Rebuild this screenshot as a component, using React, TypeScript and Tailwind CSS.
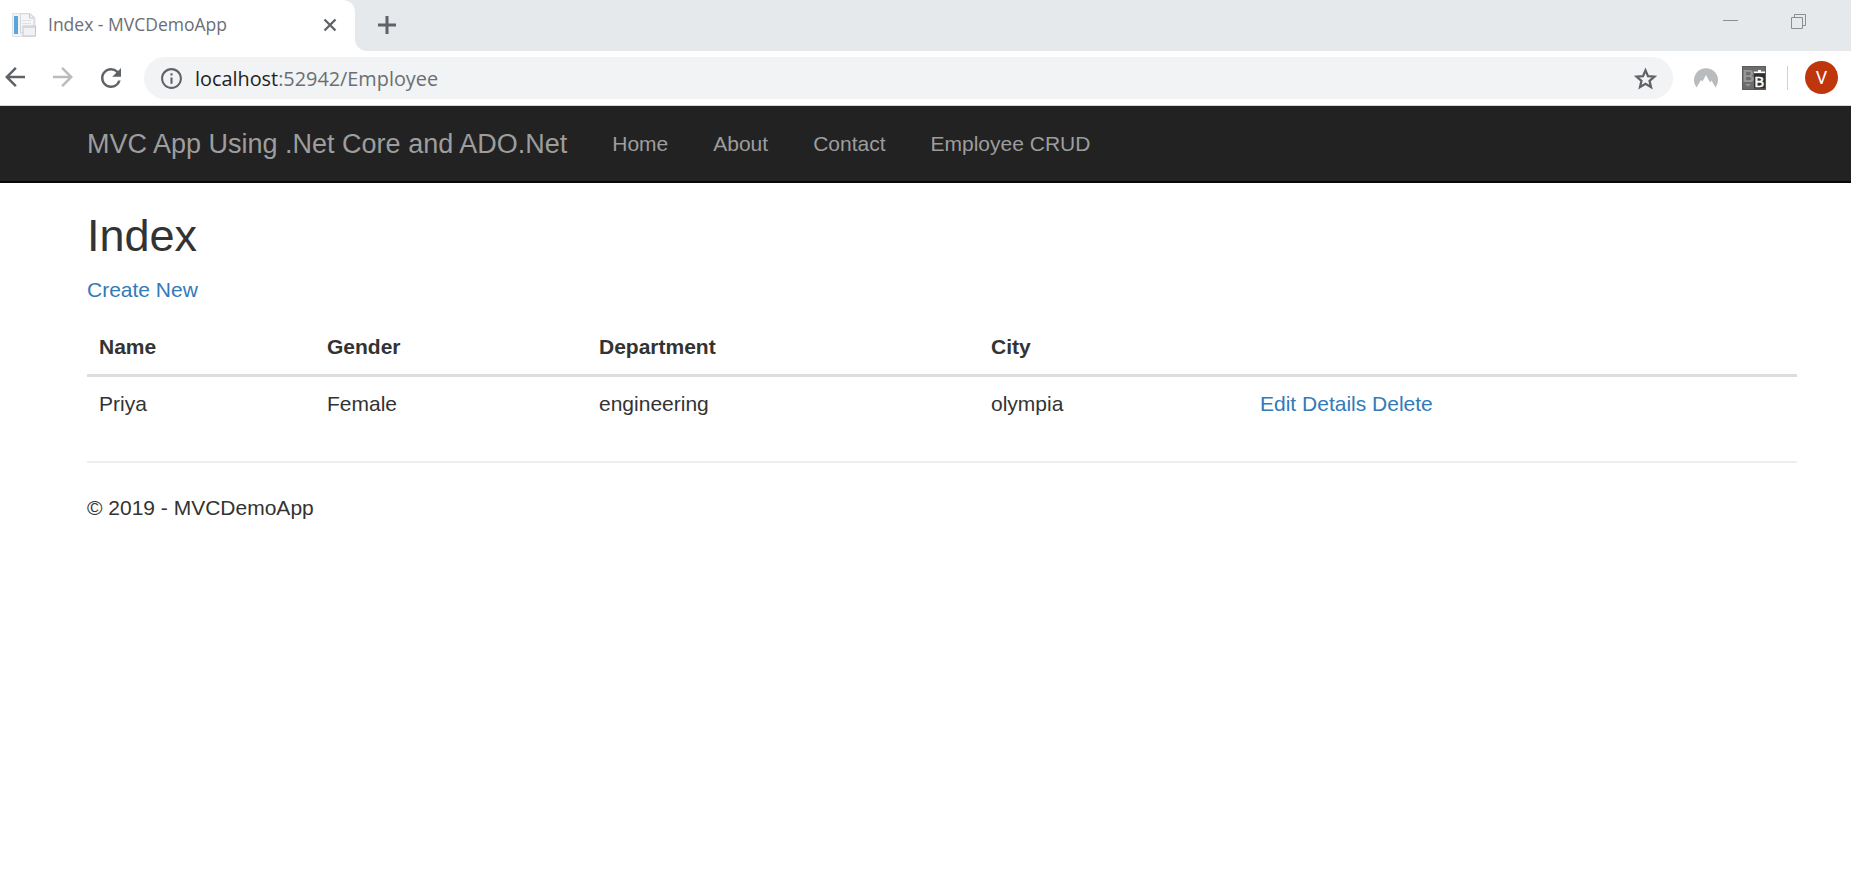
import React from "react";
import { MdArrowBack, MdArrowForward, MdInfoOutline, MdRefresh } from "react-icons/md";

function PageIcon() {
  return (
    <svg viewBox="0 0 24 24" className="mb-px size-6" fill="none">
      <path d="M.5 .5h17.500l5 4v19H.5z" fill="#f1f2f4" stroke="#dfe1e4" />
      <path d="M8.500 .8h9l4.500 4v15H8.500z" fill="#f5f6f8" stroke="#d3d6da" />
      <path d="M17.500 1v4h4.500" stroke="#c5c9ce" />
      <path d="M10 7.500h9M10 10.500h9" stroke="#dfe2e6" />
      <path d="M2 3h4v18H2z" fill="#5aa5da" />
      <path d="M11 13h12.500v10H11z" fill="#f1f2f6" stroke="#c3c7cd" />
      <path d="M11.500 14.200h11.500" stroke="#d2d6dc" strokeWidth="1.500" />
    </svg>
  );
}

function StarIcon() {
  return (
    <svg viewBox="0 0 24 24" className="mr-[15px] ml-auto size-[25px]" fill="none" stroke="#5f6368" strokeWidth="2.200">
      <path d="M12 4.200l2.400 5.600 6.100.5-4.600 4 1.400 6L12 17.100l-5.300 3.200 1.400-6-4.600-4 6.100-.5z" />
    </svg>
  );
}

function SwapIcon() {
  return (
    <svg viewBox="0 0 24 24" className="ml-6 size-6 font-['Liberation_Sans',sans-serif] font-bold">
      <path d="M0 0h24v24H0z" fill="#6c6c6c" />
      <path d="M.5 .5h23v23H.5z" fill="none" stroke="#5a5a5a" />
      <text x=".5" y="15.500" fontSize="16.500" fill="#989898">B</text>
      <path d="M3 18h6l-3 2.500z" fill="#989898" />
      <path d="M12 7.500h11v15H12z" fill="#2f2f2f" />
      <path d="M12 7h11V5.500h-4V4h-3v1.500h-4z" fill="#fff" />
      <text x="12.500" y="21" fontSize="14.500" fontWeight="400" stroke="#fff" strokeWidth=".5" fill="#fff">B</text>
    </svg>
  );
}

function TabStrip() {
  return (
    <div className="flex h-[51px] bg-[#e5e9ec]">
      <div className="flex w-[355px] items-center rounded-tr-[12px] bg-white pl-3">
        <PageIcon />
        <span className="-mt-1 ml-3 w-[275px] font-['Open_Sans',sans-serif] text-[17.500px] whitespace-nowrap text-[#6b6e73]">
          Index - MVCDemoApp
        </span>
        <svg viewBox="0 0 14 14" className="mb-px size-[14px]" stroke="#5f6368" strokeWidth="2.300">
          <path d="M1.500 1.500l11 11M12.500 1.500l-11 11" />
        </svg>
      </div>
      <div className="flex flex-1 bg-white">
        <div className="flex flex-1 rounded-bl-[12px] bg-[#e5e9ec]">
          <svg viewBox="0 0 18 18" className="mt-4 ml-[23px] size-[18px]" stroke="#5f6368" strokeWidth="3">
            <path d="M9 0v18M0 9h18" />
          </svg>
          <svg viewBox="0 0 83 15" className="mt-[14px] mr-[45px] ml-auto h-[15px] w-[83px]" fill="none" stroke="#8b8d8f">
            <path d="M0 6.500h15M68.500 3.500h11v11h-11zM71.500 3.500v-3h11v11h-3" />
          </svg>
        </div>
      </div>
    </div>
  );
}

function Toolbar() {
  return (
    <div className="flex h-[55px] items-center border-b border-[#d5d8d6] bg-white">
      <MdArrowBack className="mb-[2px] size-[30px] text-[#5f6368]" />
      <MdArrowForward className="mb-[2px] ml-[18px] size-[30px] text-[#babcbe]" />
      <MdRefresh className="mb-px ml-[18px] size-[30px] text-[#5f6368]" />
      <div className="ml-[18px] flex h-[42px] w-[1529px] items-center rounded-full bg-[#f1f3f4] pl-[15px]">
        <MdInfoOutline className="size-[25px] text-[#5f6368]" />
        <span className="mt-[2px] ml-[11px] font-['Open_Sans',sans-serif] text-[19.850px] whitespace-nowrap text-[#6b6e73]">
          <span className="text-[#202124]">localhost</span>:52942/Employee
        </span>
        <StarIcon />
      </div>
      <svg viewBox="0 0 24 20" className="ml-[21px] h-5 w-6" fill="#b9bcbf">
        <path d="M2.500 19.500A12 12 0 1 1 21.500 19.500L17.500 12.500l-1.500 2L12 7l-3.500 6.500-1.500-1.500z" />
      </svg>
      <SwapIcon />
      <div className="ml-[21px] h-6 w-px bg-[#cfd1d3]" />
      <div className="mb-px ml-[17px] flex size-[33px] items-center justify-center rounded-full bg-[#bf360c] font-[Roboto,sans-serif] text-[18px] text-white">
        V
      </div>
    </div>
  );
}

const links = ["Home", "About", "Contact", "Employee CRUD"];

function Navbar() {
  return (
    <nav className="flex h-[77px] items-center border-b-2 border-[#080808] bg-[#222] pl-[87px] text-[#9d9d9d]">
      <a className="text-[27px]">MVC App Using .Net Core and ADO.Net</a>
      <ul className="ml-[45px] flex gap-[45px]">
        {links.map((label) => (
          <li key={label}>{label}</li>
        ))}
      </ul>
    </nav>
  );
}

export default function App() {
  return (
    <div className="h-[872px] w-[1851px] overflow-hidden bg-white font-['Liberation_Sans',Arial,sans-serif] text-[21px] leading-[30px] text-[#333]">
      <TabStrip />
      <Toolbar />
      <Navbar />
      <main className="ml-[87px] w-[1710px]">
        <h2 className="pt-[28px] text-[45px] leading-[50px]">Index</h2>
        <p className="mt-[14px]">
          <a className="text-[#337ab7]">Create New</a>
        </p>
        <table className="mt-[14px] w-full table-fixed border-collapse text-left">
          <colgroup>
            <col className="w-[228px]" />
            <col className="w-[272px]" />
            <col className="w-[392px]" />
            <col className="w-[269px]" />
            <col />
          </colgroup>
          <thead>
            <tr className="h-[56px] border-b-3 border-[#ddd]">
              <th className="px-3 pt-[2px]">Name</th>
              <th className="px-3 pt-[2px]">Gender</th>
              <th className="px-3 pt-[2px]">Department</th>
              <th className="px-3 pt-[2px]">City</th>
              <th />
            </tr>
          </thead>
          <tbody>
            <tr className="h-[55px]">
              <td className="px-3 pt-[2px]">Priya</td>
              <td className="px-3 pt-[2px]">Female</td>
              <td className="px-3 pt-[2px]">engineering</td>
              <td className="px-3 pt-[2px]">olympia</td>
              <td className="px-3 pt-[2px] text-[#337ab7]">
                <a>Edit</a> <a>Details</a> <a>Delete</a>
              </td>
            </tr>
          </tbody>
        </table>
        <hr className="mt-[31px] border-t-2 border-[#eee]" />
        <footer className="mt-[30px]">© 2019 - MVCDemoApp</footer>
      </main>
    </div>
  );
}
